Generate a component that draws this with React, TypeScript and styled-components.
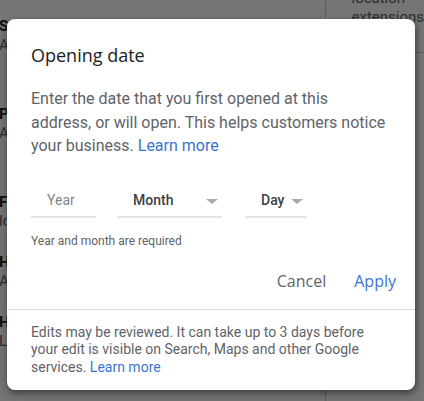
import React from "react";
import styled, { createGlobalStyle } from "styled-components";

const Global = createGlobalStyle`
  html, body { margin: 0; padding: 0; }
  body { width: 424px; height: 401px; overflow: hidden; font-family: Roboto, "Liberation Sans", sans-serif; background: #fff; }
`;

const Page = styled.div`
  position: relative;
  width: 424px;
  height: 401px;
  overflow: hidden;
  background: #fff;
  display: flex;
`;

const LeftList = styled.div`
  width: 332px;
  display: flex;
  flex-direction: column;
  padding: 17px 0 0 0;
  margin-left: -1px;
  box-sizing: border-box;
`;

const ListItem = styled.div<{ $top: number }>`
  display: flex;
  flex-direction: column;
  margin-top: ${(p) => p.$top}px;
  font-size: 15px;
  line-height: 19px;
  color: #202124;
`;

const ItemLabel = styled.span`
  font-weight: 700;
`;

const ItemValue = styled.span`
  color: #5f6368;
`;

const RightCol = styled.div`
  flex: 1;
  border-left: 1px solid #c8c8c8;
  display: flex;
  flex-direction: column;
`;

const RightCell = styled.div`
  height: 63px;
  border-bottom: 1px solid #c8c8c8;
  padding: 0 0 0 25px;
  margin-top: -11px;
  font-size: 15px;
  line-height: 19px;
  color: #5f6368;
  box-sizing: content-box;
`;

const Scrim = styled.div`
  position: absolute;
  inset: 0;
  background: rgba(0, 0, 0, 0.54);
`;

const Dialog = styled.div`
  position: absolute;
  left: 7px;
  top: 19px;
  width: 408px;
  height: 371px;
  background: #fff;
  border-radius: 8px;
  box-shadow: 0 4px 10px rgba(0, 0, 0, 0.35), 2px 2px 4px rgba(0,0,0,0.2);
  display: flex;
  flex-direction: column;
  box-sizing: border-box;
  overflow: hidden;
`;

const Body = styled.div`
  padding: 24px 24px 10px 24px;
  display: flex;
  flex-direction: column;
`;

const Title = styled.h2`
  margin: 0;
  font-family: "Open Sans", Roboto, sans-serif;
  font-weight: 400;
  font-size: 18px;
  line-height: 25px;
  color: #202124;
`;

const Intro = styled.p`
  margin: 19px 0 0 0;
  font-size: 16px;
  line-height: 23.5px;
  color: #5f6368;
`;

const Link = styled.a`
  color: #3b74d0;
  text-decoration: none;
`;

const Fields = styled.div`
  display: flex;
  margin-top: 27px;
`;

const Field = styled.div<{ $w: number; $mr: number }>`
  width: ${(p) => p.$w}px;
  margin-right: ${(p) => p.$mr}px;
  height: 33px;
  border-bottom: 2px solid #e3e5e8;
  display: flex;
  align-items: center;
  box-sizing: border-box;
  padding: 0 4px 0 16px;
`;

const FieldText = styled.span<{ $strong?: boolean }>`
  flex: 1;
  font-size: 14px;
  font-weight: ${(p) => (p.$strong ? 500 : 400)};
  color: ${(p) => (p.$strong ? "#3c4043" : "#80868b")};
`;

const Caret = styled.span`
  width: 0;
  height: 0;
  border-left: 6px solid transparent;
  border-right: 6px solid transparent;
  border-top: 5px solid #a6a9ad;
  margin-top: 2px;
`;

const Helper = styled.div`
  margin-top: 15px;
  font-size: 12px;
  line-height: 16px;
  color: #5f6368;
`;

const Actions = styled.div`
  display: flex;
  justify-content: flex-end;
  gap: 8px;
  margin-top: 14px;
  margin-right: -15px;
`;

const Button = styled.button<{ $primary?: boolean }>`
  height: 36px;
  padding: 0 10px;
  border: none;
  background: transparent;
  font-family: "Open Sans", Roboto, sans-serif;
  font-size: 16px;
  font-weight: 500;
  color: ${(p) => (p.$primary ? "#3b74d0" : "#5f6368")};
  cursor: pointer;
`;

const Divider = styled.div`
  height: 1px;
  background: #dadce0;
`;

const Footer = styled.p`
  margin: 0;
  padding: 14px 24px;
  font-size: 14px;
  line-height: 17.5px;
  color: #5f6368;
`;

export default function App() {
  return (
    <>
      <Global />
      <Page>
        <LeftList>
          <ListItem $top={0}><ItemLabel>S</ItemLabel><ItemValue>A</ItemValue></ListItem>
          <ListItem $top={50}><ItemLabel>P</ItemLabel><ItemValue>A</ItemValue></ListItem>
          <ListItem $top={50}><ItemLabel>F</ItemLabel><ItemValue>lc</ItemValue></ListItem>
          <ListItem $top={22}><ItemLabel>H</ItemLabel><ItemValue>A</ItemValue></ListItem>
          <ListItem $top={22}><ItemLabel>H</ItemLabel><ItemValue>L</ItemValue></ListItem>
        </LeftList>
        <RightCol>
          <RightCell>location<br />extensions</RightCell>
        </RightCol>
        <Scrim />
        <Dialog>
          <Body>
            <Title>Opening date</Title>
            <Intro>
              Enter the date that you first opened at this address, or will open. This helps customers notice your business. <Link href="#">Learn more</Link>
            </Intro>
            <Fields>
              <Field $w={65} $mr={21}><FieldText>Year</FieldText></Field>
              <Field $w={105} $mr={23}><FieldText $strong>Month</FieldText><Caret /></Field>
              <Field $w={62} $mr={0}><FieldText $strong>Day</FieldText><Caret /></Field>
            </Fields>
            <Helper>Year and month are required</Helper>
            <Actions>
              <Button>Cancel</Button>
              <Button $primary>Apply</Button>
            </Actions>
          </Body>
          <Divider />
          <Footer>
            Edits may be reviewed. It can take up to 3 days before your edit is visible on Search, Maps and other Google services. <Link href="#">Learn more</Link>
          </Footer>
        </Dialog>
      </Page>
    </>
  );
}
